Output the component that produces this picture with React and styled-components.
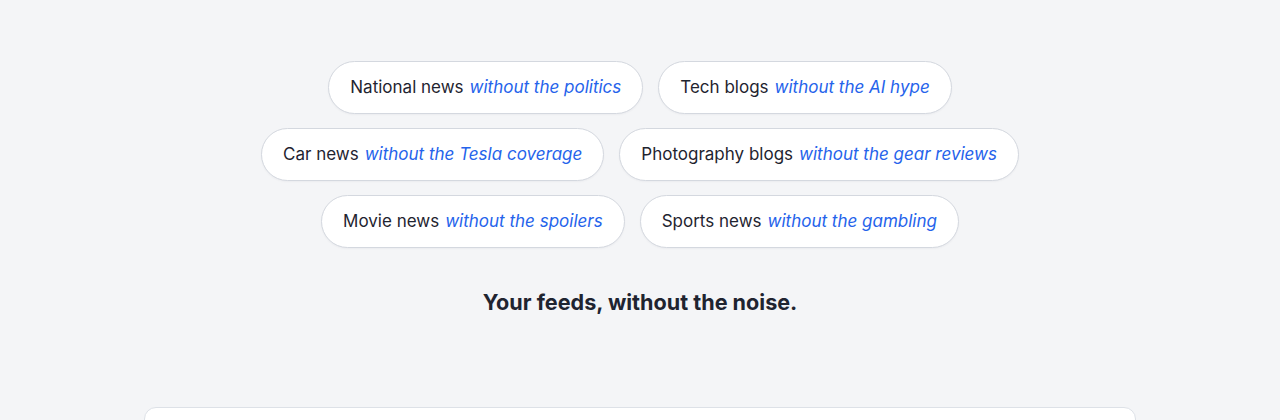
import React from "react";
import styled, { createGlobalStyle } from "styled-components";

const GlobalStyle = createGlobalStyle`
  html, body {
    margin: 0;
    padding: 0;
    background: #f4f5f7;
    font-family: "Inter", "Noto Sans", sans-serif;
    color: #1f2430;
  }
`;

const examples = [
  [
    { topic: "National news", filter: "without the politics" },
    { topic: "Tech blogs", filter: "without the AI hype" },
  ],
  [
    { topic: "Car news", filter: "without the Tesla coverage" },
    { topic: "Photography blogs", filter: "without the gear reviews" },
  ],
  [
    { topic: "Movie news", filter: "without the spoilers" },
    { topic: "Sports news", filter: "without the gambling" },
  ],
];

function App() {
  return (
    <>
      <GlobalStyle />
      <Page>
        <Pills>
          {examples.map((row, i) => (
            <PillRow key={i}>
              {row.map((ex) => (
                <Pill key={ex.topic}>
                  {ex.topic}
                  <Filter>{ex.filter}</Filter>
                </Pill>
              ))}
            </PillRow>
          ))}
        </Pills>
        <Tagline>Your feeds, without the noise.</Tagline>
        <Card />
      </Page>
    </>
  );
}

const Page = styled.main`
  display: flex;
  flex-direction: column;
  align-items: center;
  padding-top: 61px;
  height: 420px;
  box-sizing: border-box;
  overflow: hidden;
`;

const Pills = styled.div`
  display: flex;
  flex-direction: column;
  align-items: center;
  gap: 14px;
`;

const PillRow = styled.div`
  display: flex;
  gap: 15px;
`;

const Pill = styled.div`
  display: flex;
  align-items: center;
  gap: 6px;
  padding: 12px 21px;
  background: #ffffff;
  border: 1px solid #d4d8df;
  border-radius: 999px;
  font-size: 17px;
  line-height: 27px;
  color: #1f2430;
  box-shadow: 0 1px 2px rgba(16, 24, 40, 0.04);
  white-space: nowrap;
`;

const Filter = styled.em`
  color: #2563eb;
  font-style: italic;
`;

const Tagline = styled.h2`
  margin: 39px 0 0;
  font-size: 21.6px;
  line-height: 30px;
  font-weight: 700;
  color: #1f2430;
`;

const Card = styled.section`
  margin-top: 90px;
  width: 990px;
  height: 120px;
  flex-shrink: 0;
  background: #ffffff;
  border: 1px solid #dde1e7;
  border-radius: 12px;
`;

export default App;
